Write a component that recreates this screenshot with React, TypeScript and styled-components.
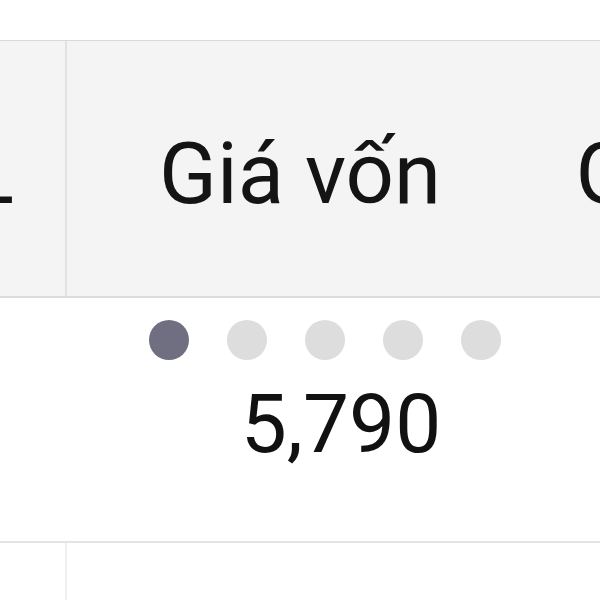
import React from "react"
import styled, { createGlobalStyle } from "styled-components"

const GlobalStyle = createGlobalStyle`
  html, body {
    margin: 0;
    padding: 0;
    background: #ffffff;
    overflow: hidden;
  }
  body {
    font-family: Roboto, "Noto Sans", sans-serif;
    color: #121212;
  }
`

const columns = [
  { key: "qty", title: "SL", width: 200, divider: true },
  { key: "cost", title: "Giá vốn", width: 468, divider: false },
  { key: "price", title: "Giá bán", width: 370, divider: false },
]

export default function App() {
  return (
    <>
      <GlobalStyle />
      <Page>
        <Table>
          <HeaderRow>
            {columns.map((col) => (
              <HeaderCell key={col.key} $width={col.width} $divider={col.divider}>
                {col.title}
              </HeaderCell>
            ))}
          </HeaderRow>
          <BodyRow>
            <BodyCell $width={columns[0].width} />
            <BodyCell $width={columns[1].width}>
              <Dots>
                {[0, 1, 2, 3, 4].map((i) => (
                  <Dot key={i} $active={i === 0} />
                ))}
              </Dots>
              <Amount>5,790</Amount>
            </BodyCell>
            <BodyCell $width={columns[2].width} />
          </BodyRow>
          <BodyRow $short>
            <BodyCell $width={columns[0].width} $divider />
            <BodyCell $width={columns[1].width} />
            <BodyCell $width={columns[2].width} />
          </BodyRow>
        </Table>
      </Page>
    </>
  )
}

const Page = styled.div`
  width: 600px;
  height: 600px;
  overflow: hidden;
  padding-top: 40px;
  box-sizing: border-box;
`

const Table = styled.div`
  display: flex;
  flex-direction: column;
  margin-left: -133px;
  width: max-content;
`

const HeaderRow = styled.div`
  display: flex;
  height: 258px;
  background: #f4f4f4;
  border-top: 1px solid #d9d9d9;
  border-bottom: 2px solid #dcdcdc;
  box-sizing: border-box;
`

const HeaderCell = styled.div<{ $width: number; $divider?: boolean }>`
  width: ${(p) => p.$width}px;
  flex: none;
  display: flex;
  align-items: center;
  justify-content: center;
  padding-top: 10px;
  box-sizing: border-box;
  border-right: 2px solid ${(p) => (p.$divider ? "#e2e2e2" : "transparent")};
  font-size: 85px;
  font-weight: 400;
  color: #141414;
  white-space: nowrap;
`

const BodyRow = styled.div<{ $short?: boolean }>`
  display: flex;
  height: ${(p) => (p.$short ? 120 : 245)}px;
  border-bottom: ${(p) => (p.$short ? "none" : "2px solid #e4e4e4")};
  background: #ffffff;
  box-sizing: border-box;
`

const BodyCell = styled.div<{ $width: number; $divider?: boolean }>`
  width: ${(p) => p.$width}px;
  flex: none;
  display: flex;
  flex-direction: column;
  align-items: center;
  padding-top: 22px;
  padding-left: 50px;
  box-sizing: border-box;
  border-right: 2px solid ${(p) => (p.$divider ? "#efefef" : "transparent")};
  background: #ffffff;
`

const Dots = styled.div`
  display: flex;
  gap: 38px;
`

const Dot = styled.span<{ $active?: boolean }>`
  width: 40px;
  height: 40px;
  border-radius: 50%;
  background: ${(p) => (p.$active ? "#706f82" : "#dddddd")};
`

const Amount = styled.div`
  margin-top: 16px;
  margin-left: 32px;
  font-size: 82px;
  font-weight: 400;
  color: #111111;
  line-height: normal;
`
